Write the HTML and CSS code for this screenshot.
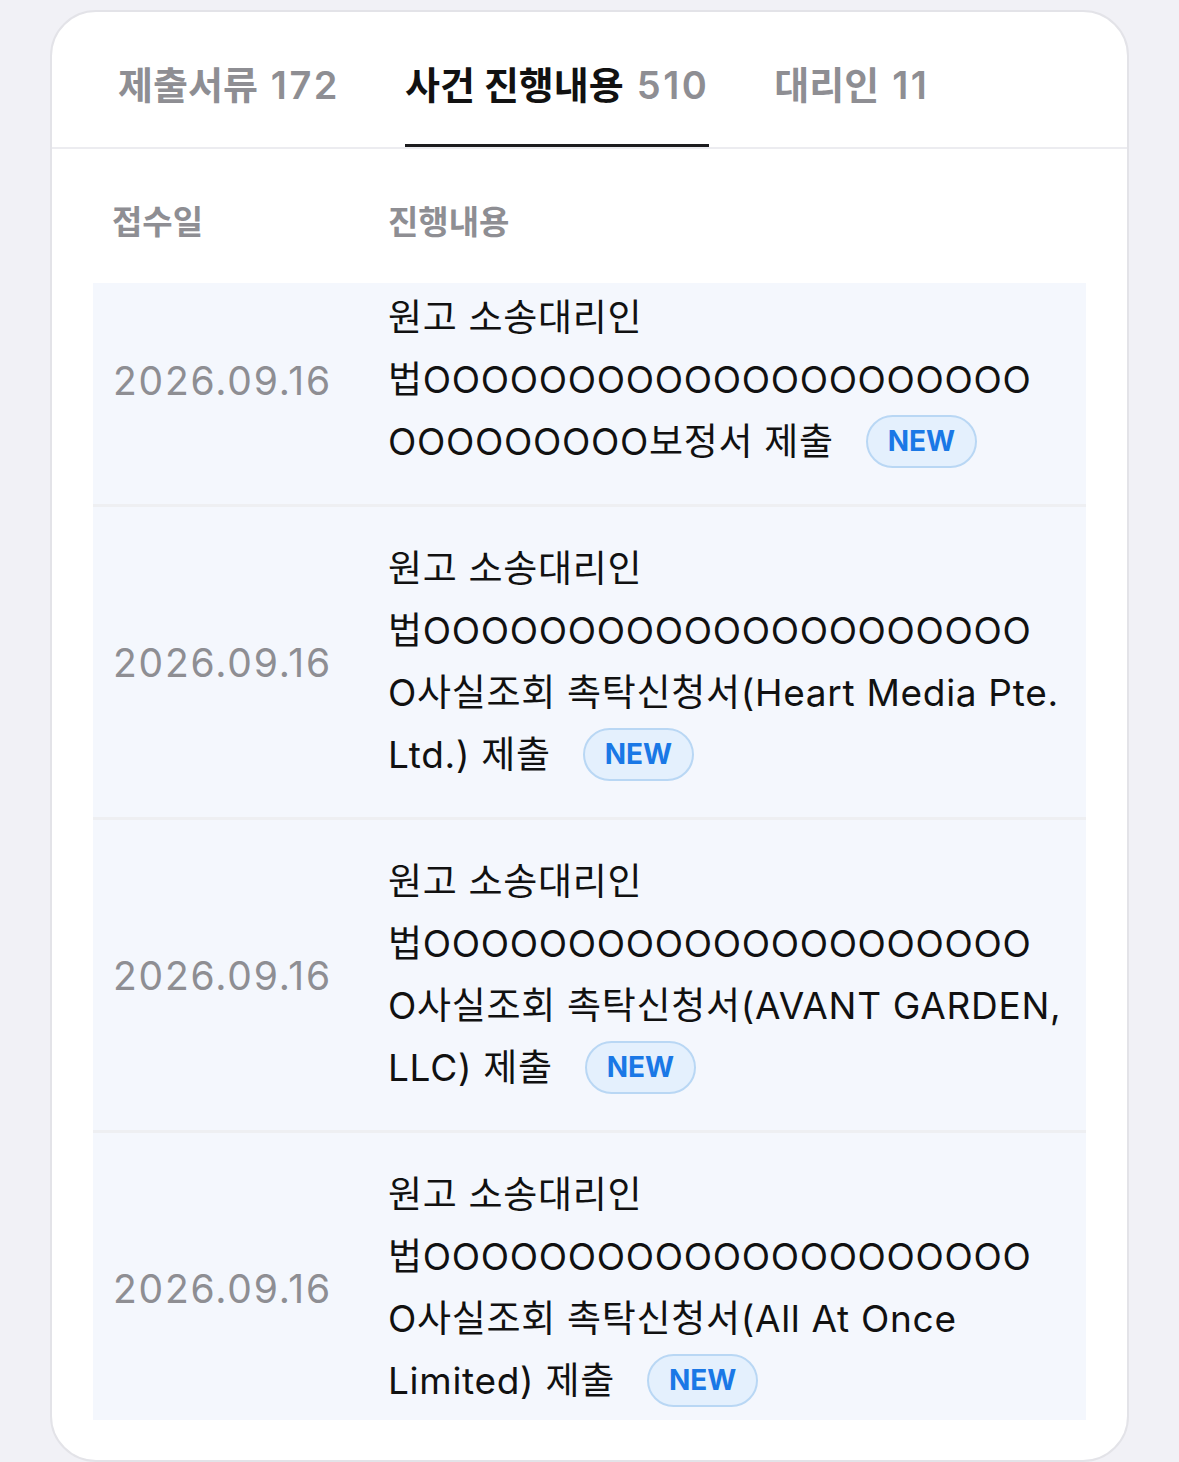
FILE: index.html
```html
<!DOCTYPE html>
<html lang="ko">
<head>
    <meta charset="UTF-8">
    <meta name="viewport" content="width=device-width, initial-scale=1.0">
    <title>사건 진행내용</title>
    <link rel="stylesheet" href="styles.css">
</head>
<body>

<div class="card">
    <div class="tabs">
        <div class="tab">제출서류 <span class="count">172</span></div>
        <div class="tab active">사건 진행내용 <span class="count">510</span></div>
        <div class="tab">대리인 <span class="count">11</span></div>
    </div>

    <div class="table-head">
        <div class="col-date">접수일</div>
        <div class="col-content">진행내용</div>
    </div>

    <div class="rows-view">
        <div class="rows">
            <div class="row">
                <div class="date">2026.09.16</div>
                <div class="content">원고 소송대리인<br>법OOOOOOOOOOOOOOOOOOOOO<br>OOOOOOOOO보정서 제출<span class="badge">NEW</span></div>
            </div>
            <div class="row">
                <div class="date">2026.09.16</div>
                <div class="content">원고 소송대리인<br>법OOOOOOOOOOOOOOOOOOOOO<br>O사실조회 촉탁신청서(Heart Media Pte.<br>Ltd.) 제출<span class="badge">NEW</span></div>
            </div>
            <div class="row">
                <div class="date">2026.09.16</div>
                <div class="content">원고 소송대리인<br>법OOOOOOOOOOOOOOOOOOOOO<br>O사실조회 촉탁신청서(AVANT GARDEN,<br>LLC) 제출<span class="badge">NEW</span></div>
            </div>
            <div class="row">
                <div class="date">2026.09.16</div>
                <div class="content">원고 소송대리인<br>법OOOOOOOOOOOOOOOOOOOOO<br>O사실조회 촉탁신청서(All At Once<br>Limited) 제출<span class="badge">NEW</span></div>
            </div>
        </div>
    </div>
</div>

</body>
</html>
```

FILE: styles.css
```css
body {
    margin: 0;
    background-color: #f1f1f6;
    font-family: Inter, "Noto Sans CJK KR", sans-serif;
    color: #111;
}

.card {
    margin: 10px 50px 0;
    height: 1448px;
    background-color: #fff;
    border: 2px solid #e3e3e8;
    border-radius: 46px;
    overflow: hidden;
}

/* 탭 */
.tabs {
    display: flex;
    gap: 65px;
    padding-left: 66px;
    border-bottom: 2px solid #ececf0;
}

.tab {
    font-size: 38px;
    font-weight: 700;
    line-height: 60px;
    color: #8e8e93;
    padding: 43px 0 29px;
    border-bottom: 3px solid transparent;
    white-space: nowrap;
}

.tab .count {
    margin-left: 4px;
    font-weight: 600;
    color: #8e8e93;
    letter-spacing: 2.5px;
}

.tab.active {
    color: #111;
    border-bottom-color: #1c1c1e;
}

/* 표 머리 */
.table-head {
    display: grid;
    grid-template-columns: 295px 1fr;
    margin: 0 41px;
    padding: 51px 0 39px;
    font-size: 33px;
    font-weight: 700;
    line-height: 44px;
    color: #8e8e93;
}

.col-date {
    padding-left: 19px;
}

/* 목록 */
.rows-view {
    margin: 0 41px;
    height: 1137px;
    overflow: hidden;
}

.rows {
    display: flex;
    flex-direction: column;
    gap: 3px;
    margin-top: -27px;
    background-color: #eeeff2;
}

.row {
    display: grid;
    grid-template-columns: 295px 1fr;
    align-items: center;
    background-color: #f4f7fd;
    padding: 31px 0;
}

.date {
    padding-left: 20px;
    font-size: 39px;
    letter-spacing: 1.8px;
    color: #8e8e93;
}

.content {
    font-size: 37px;
    letter-spacing: 0.7px;
    line-height: 62px;
    white-space: nowrap;
}

.badge {
    display: inline-block;
    margin-left: 32px;
    height: 49px;
    padding: 0 20px;
    line-height: 49px;
    vertical-align: middle;
    position: relative;
    top: -3px;
    font-size: 28px;
    font-weight: 700;
    letter-spacing: 0;
    color: #1a78e6;
    background-color: #e4f0fd;
    border: 2px solid #b9d7f4;
    border-radius: 30px;
}
```
